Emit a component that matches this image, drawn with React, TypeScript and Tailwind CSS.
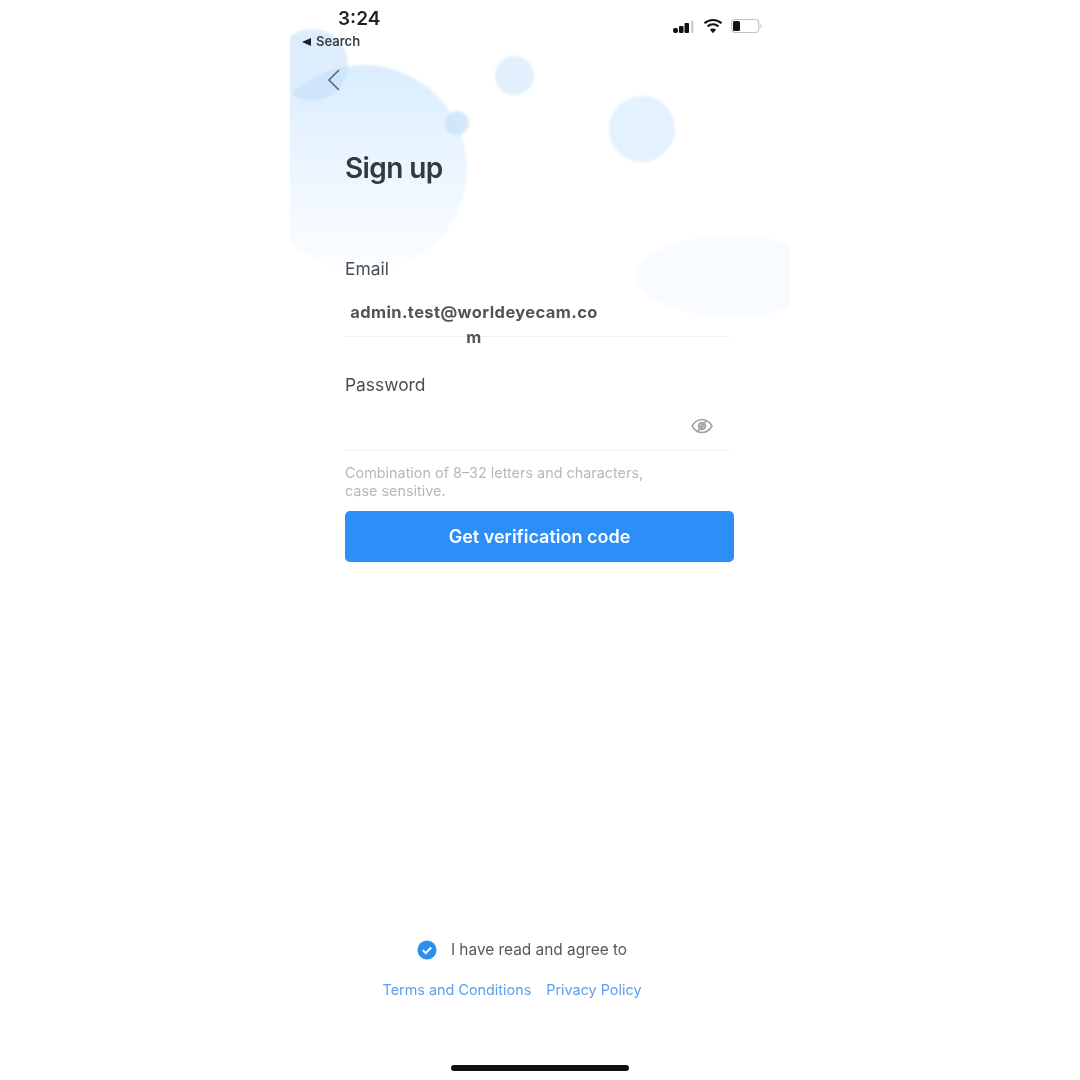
// Sign up screen, phone screenshot centred on a white page
function SignalIcon() {
  return (
    <svg width="22" height="14" viewBox="0 0 22 14">
      <rect x="0" y="8" width="5" height="5" rx="2" fill="#111" />
      <rect x="6" y="6" width="4.500" height="7" rx="1" fill="#111" />
      <rect x="11.500" y="3" width="4.500" height="10" rx="1" fill="#111" />
      <rect x="18" y="0.5" width="2.500" height="12.5" rx="1" fill="#cfcfcf" />
    </svg>
  );
}

function WifiIcon() {
  return (
    <svg width="20" height="16" viewBox="0 0 20 16" fill="none" stroke="#111" strokeWidth="2.2">
      <path d="M1.5 5.2C6.3 .9 13.7 .9 18.5 5.2" />
      <path d="M4.6 8.4C7.8 5.7 12.2 5.7 15.4 8.4" />
      <path d="M10 15.2 6.9 11.5C8.8 10.2 11.2 10.2 13.1 11.5Z" fill="#111" stroke="none" />
    </svg>
  );
}

function BatteryIcon() {
  return (
    <svg width="32" height="16" viewBox="0 0 32 16">
      <rect x="0.75" y="1.5" width="27" height="13" rx="3.5" fill="none" stroke="#c4c4c4" strokeWidth="1.2" />
      <rect x="2" y="3" width="7" height="10" rx="1.5" fill="#111" />
      <path d="M29.5 5.5C31 6.2 31 9.8 29.5 10.5Z" fill="#c4c4c4" />
    </svg>
  );
}

function EyeOffIcon() {
  return (
    <svg width="24" height="20" viewBox="0 0 24 20" fill="none" stroke="#a3a3a3" strokeWidth="1.5">
      <path d="M2 10C5 5 8.5 3.5 12 3.5S19 5 22 10C19 15 15.5 16.500 12 16.500S5 15 2 10Z" />
      <circle cx="12" cy="10" r="3.600" fill="#bdbdbd" />
      <path d="M7.500 15.500 16.500 4.500" />
    </svg>
  );
}

function CheckIcon() {
  return (
    <svg width="20" height="20" viewBox="0 0 20 20">
      <circle cx="10" cy="10" r="9.500" fill="#2b8ff0" />
      <path d="M5.800 10.300 8.800 13 14.200 7.500" fill="none" stroke="#fff" strokeWidth="2" />
    </svg>
  );
}

export default function App() {
  return (
    <div className="h-[1080px] w-full bg-white flex justify-center font-['Inter',sans-serif]">
      <div className="relative w-[500px] h-[1080px] overflow-hidden bg-white">
        {/* background bubbles */}
        <div className="absolute inset-0 blur-[1px]">
          <div className="absolute left-[-30px] top-[65px] w-[207px] h-[207px] rounded-full bg-gradient-to-b from-[#dbedff] to-[#fdfeff]" />
          <div className="absolute left-[-14px] top-[29px] w-[72px] h-[72px] rounded-full bg-[#bcdcfb]/50" />
          <div className="absolute left-[205px] top-[56px] w-[39px] h-[39px] rounded-full bg-[#e2f0fe]" />
          <div className="absolute left-[155px] top-[111px] w-[24px] h-[24px] rounded-full bg-[#c5e0fb]/70" />
          <div className="absolute left-[319px] top-[96px] w-[66px] h-[66px] rounded-full bg-[#e4f1fe]" />
          <div className="absolute left-[346px] top-[236px] w-[190px] h-[80px] rounded-[50%] bg-[#f8fbff]" />
        </div>

        <div className="relative h-full flex flex-col">
          {/* status bar */}
          <div className="h-[34px] pl-[48px] pr-[27px] flex justify-between blur-[0.6px]">
            <span className="pt-[7px] text-[19px] leading-[23px] font-semibold text-[#222]">3:24</span>
            <div className="pt-[18px] flex items-start gap-[8px]">
              <div className="pt-[2px]"><SignalIcon /></div>
              <WifiIcon />
              <BatteryIcon />
            </div>
          </div>
          <div className="pl-[12px] h-[16px] flex items-center gap-[5px] text-[13px] font-semibold text-[#3a3f4a] blur-[0.6px]">
            <span className="w-0 h-0 border-y-[4px] border-y-transparent border-r-[9px] border-r-[#222]" />
            <span>Search</span>
          </div>

          <div className="pl-[36px] pt-[18px] blur-[0.6px]">
            <svg width="15" height="24" viewBox="0 0 15 24" fill="none" stroke="#5c6470" strokeWidth="1.600">
              <path d="M13 2 3 12l10 10" />
            </svg>
          </div>

          <div className="px-[55px]">
            <h1 className="pt-[58px] text-[28px] leading-[36px] font-semibold text-[#36393c] tracking-[-0.6px] blur-[0.6px]">Sign up</h1>

            <label className="block pt-[71px] text-[17.4px] leading-[24px] text-[#4a4d52] blur-[0.6px]">Email</label>
            <div className="relative h-[56px] w-[385px] border-b border-[#f0f0f0]">
              <div className="absolute left-[5px] top-[19px] w-[248px] text-center whitespace-nowrap font-bold text-[16.5px] leading-[25px] tracking-[0.4px] text-[#545454]">
                admin.test@worldeyecam.co
                <br />
                m
              </div>
            </div>

            <label className="block pt-[36px] text-[17.4px] leading-[24px] text-[#4a4d52] blur-[0.6px]">Password</label>
            <div className="h-[54px] w-[385px] border-b border-[#f0f0f0] flex items-end justify-end pb-[14px] pr-[16px] blur-[0.6px]">
              <EyeOffIcon />
            </div>

            <p className="pt-[13px] text-[14.4px] leading-[18px] text-[#b8b8b8] blur-[0.6px]">
              Combination of 8–32 letters and characters,
              <br />
              case sensitive.
            </p>

            <button className="mt-[11px] w-[389px] h-[51px] rounded-[5px] bg-[#2b8ff7] text-white text-[18px] font-semibold flex items-center justify-center blur-[0.4px]">
              Get verification code
            </button>
          </div>

          {/* terms + home indicator */}
          <div className="mt-auto flex flex-col items-center blur-[0.6px]">
            <div className="pr-[36px] flex items-center gap-[14px] text-[15.4px] leading-[20px] text-[#55585c]">
              <CheckIcon />
              <span>I have read and agree to</span>
            </div>
            <div className="mt-[20px] pr-[56px] flex gap-[15px] text-[14.4px] leading-[20px] text-[#5a9ff0]">
              <span>Terms and Conditions</span>
              <span>Privacy Policy</span>
            </div>
            <div className="mt-[65px] mb-[9px] w-[178px] h-[6px] rounded-full bg-[#111]" />
          </div>
        </div>
      </div>
    </div>
  );
}
